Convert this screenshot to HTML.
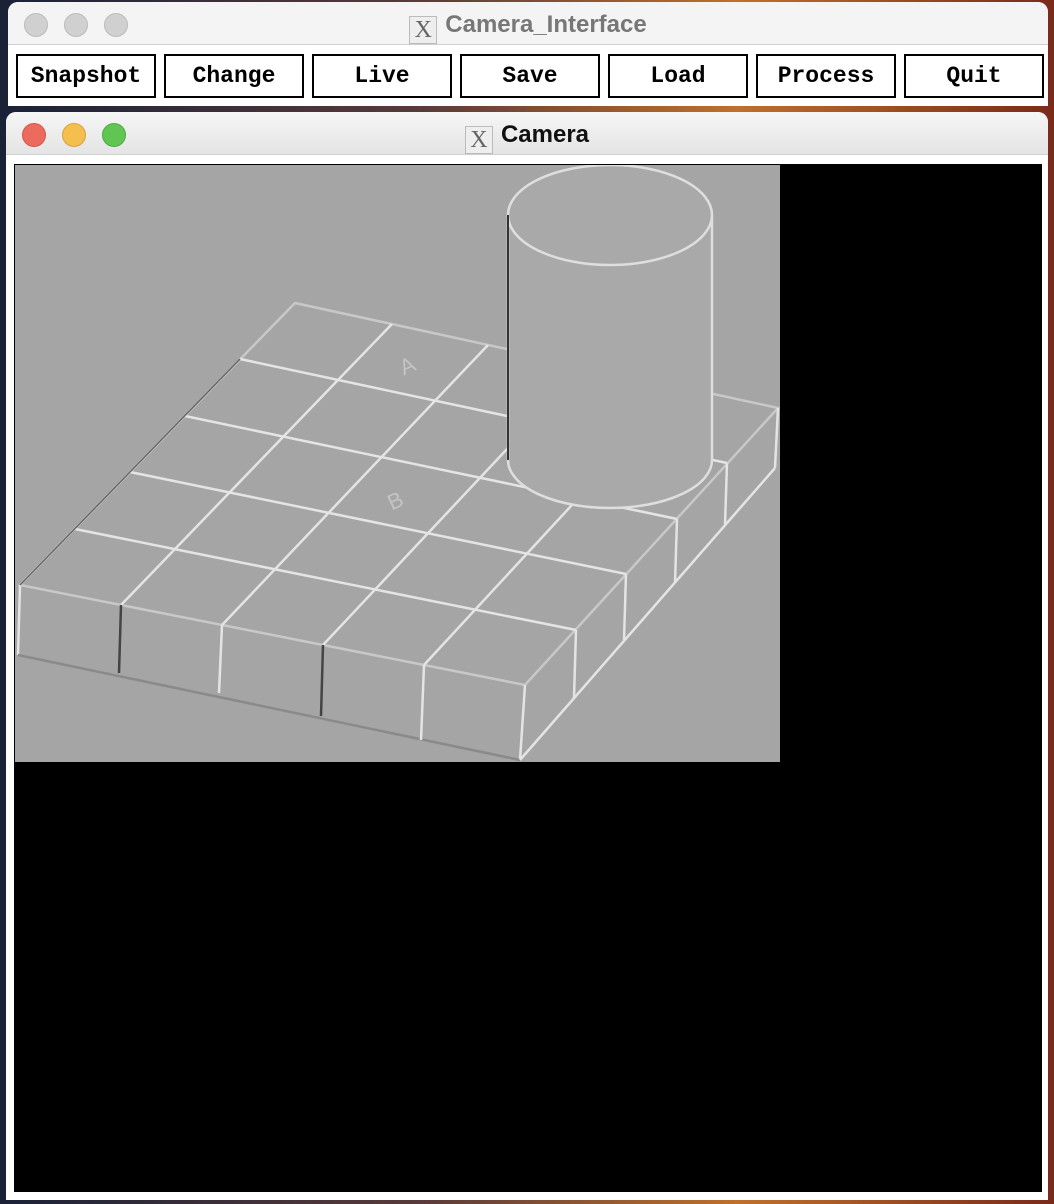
<!DOCTYPE html>
<html><head><style>
body{margin:0;width:1054px;height:1204px;overflow:hidden;background:linear-gradient(90deg,#1a2238 0%,#5a3a3a 40%,#c0702a 70%,#7a2a1a 100%);font-family:"Liberation Sans",sans-serif;position:relative}
.win{position:absolute;background:#fff;border-radius:10px 10px 0 0;overflow:hidden}
.tb{position:absolute;left:0;right:0;top:0;background:linear-gradient(#f6f6f6,#e4e4e4);border-bottom:1px solid #cfcfcf}
.dot{position:absolute;width:22px;height:22px;border-radius:50%;top:11px}
.title{position:absolute;top:0;width:100%;text-align:center;font-weight:bold;font-size:24px}
.xi{display:inline-block;width:26px;height:26px;border:1px solid #bbb;background:#eee;font-size:24px;line-height:27px;font-weight:normal;vertical-align:-5px;margin-right:8px;color:#666;font-family:"Liberation Serif",serif}
.btn{position:absolute;top:52px;width:136px;height:40px;border:2px solid #000;background:#fff;font-family:"Liberation Mono",monospace;font-weight:bold;font-size:23px;text-align:center;line-height:40px}
</style></head><body>
<div class="win" style="left:8px;top:2px;width:1040px;height:104px">
 <div class="tb" style="height:42px;background:#f4f4f4"></div>
 <div class="dot" style="left:16px;background:#d0d0d0;border:1px solid #bbb"></div>
 <div class="dot" style="left:56px;background:#d0d0d0;border:1px solid #bbb"></div>
 <div class="dot" style="left:96px;background:#d0d0d0;border:1px solid #bbb"></div>
 <div class="title" style="line-height:46px;color:#777"><span class="xi">X</span>Camera_Interface</div>
 <div class="btn" style="left:8px">Snapshot</div>
 <div class="btn" style="left:156px">Change</div>
 <div class="btn" style="left:304px">Live</div>
 <div class="btn" style="left:452px">Save</div>
 <div class="btn" style="left:600px">Load</div>
 <div class="btn" style="left:748px">Process</div>
 <div class="btn" style="left:896px">Quit</div>
</div>
<div class="win" style="left:6px;top:112px;width:1042px;height:1088px">
 <div class="tb" style="height:42px"></div>
 <div class="dot" style="left:16px;background:#ec6a5e;border:1px solid #d0584d"></div>
 <div class="dot" style="left:56px;background:#f5bf4f;border:1px solid #d9a23c"></div>
 <div class="dot" style="left:96px;background:#61c554;border:1px solid #4ea942"></div>
 <div class="title" style="line-height:46px;color:#111"><span class="xi">X</span>Camera</div>
 <div style="position:absolute;left:8px;top:52px;width:1028px;height:1028px;background:#000"></div>
 <svg style="position:absolute;left:9px;top:53px" width="765" height="597" viewBox="15 165 765 597">
  <rect x="15" y="165" width="765" height="597" fill="#a5a5a5"/>
  <g stroke="#e4e4e4" stroke-width="2.5" fill="none">
   <polygon points="295,303 778,408 525,685 20,585" stroke="#c8c8c8"/>
   <line x1="20" y1="585" x2="18" y2="655"/>
   <line x1="525" y1="685" x2="520" y2="760"/>
   <line x1="778" y1="408" x2="775" y2="468"/>
   <line x1="18" y1="655" x2="520" y2="760" stroke="#8a8a8a"/>
   <line x1="520" y1="760" x2="775" y2="468"/>
   <line x1="240" y1="359" x2="727" y2="463"/>
   <line x1="185" y1="416" x2="677" y2="519"/>
   <line x1="130" y1="472" x2="626" y2="574"/>
   <line x1="75" y1="529" x2="576" y2="630"/>
   <line x1="392" y1="324" x2="121" y2="605"/>
   <line x1="488" y1="345" x2="222" y2="625"/>
   <line x1="585" y1="366" x2="323" y2="645"/>
   <line x1="681" y1="387" x2="424" y2="665"/>
   <line x1="121" y1="605" x2="119" y2="673" stroke="#444"/>
   <line x1="222" y1="625" x2="219" y2="693"/>
   <line x1="323" y1="645" x2="321" y2="716" stroke="#444"/>
   <line x1="424" y1="665" x2="421" y2="740"/>
   <line x1="576" y1="630" x2="574" y2="698"/>
   <line x1="626" y1="574" x2="624" y2="640"/>
   <line x1="677" y1="519" x2="675" y2="583"/>
   <line x1="727" y1="463" x2="725" y2="525"/>
   <line x1="240" y1="359" x2="20" y2="585" stroke="#666" stroke-width="1.5"/>
  </g>
  <g stroke="#dedede" stroke-width="2.5" fill="#a9a9a9">
   <path d="M508,215 L508,460 A102,48 0 0 0 712,460 L712,215" />
   <ellipse cx="610" cy="215" rx="102" ry="50"/>
  </g>
  <line x1="508" y1="215" x2="508" y2="460" stroke="#333" stroke-width="2"/>
  <text x="400" y="372" font-size="22" fill="#c4c4c4" transform="rotate(-25 410 365)">A</text>
  <text x="388" y="507" font-size="22" fill="#c4c4c4" transform="rotate(-25 398 500)">B</text>
 </svg>
</div>
</body></html>
